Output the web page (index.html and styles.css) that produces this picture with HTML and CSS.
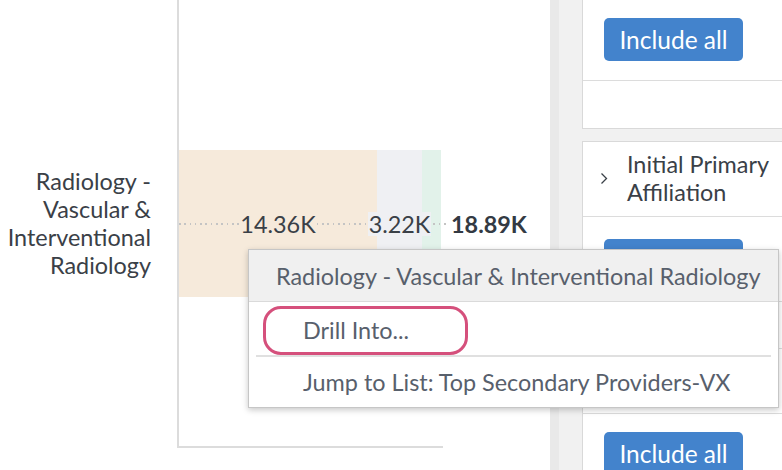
FILE: index.html
```html
<!DOCTYPE html>
<html>
<head>
<meta charset="utf-8">
<link rel="stylesheet" href="styles.css">
</head>
<body>
<div class="main">
  <div class="row-label">Radiology -<br>Vascular &amp;<br>Interventional<br>Radiology</div>
  <div class="plot">
    <div class="bar-row">
      <div class="bar">
        <div class="seg seg-a" style="width:198px"><span class="val">14.36K</span></div>
        <div class="seg seg-b" style="width:45px"><span class="val">3.22K</span></div>
        <div class="seg seg-c" style="width:19px"></div>
      </div>
      <span class="total">18.89K</span>
    </div>
  </div>
</div>
<div class="splitter"></div>
<div class="sidebar">
  <div class="panel first">
    <div class="section btn-section"><button class="btn">Include all</button></div>
    <div class="section empty"></div>
  </div>
  <div class="panel">
    <div class="section header">
      <svg class="chev" width="8" height="13" viewBox="0 0 8 13"><path d="M1.5 1.5 L6.5 6.5 L1.5 11.5" fill="none" stroke="#3a4047" stroke-width="1.3"/></svg>
      <span class="title">Initial Primary<br>Affiliation</span>
    </div>
    <div class="section btn-section"><button class="btn">Include all</button></div>
    <div class="section empty"></div>
    <div class="section empty2"></div>
    <div class="section btn-section"><button class="btn">Include all</button></div>
  </div>
</div>

<div class="menu">
  <div class="menu-head">Radiology - Vascular &amp; Interventional Radiology</div>
  <div class="menu-item drill"><span class="hl">Drill Into...</span></div>
  <div class="menu-sep"></div>
  <div class="menu-item jump">Jump to List: Top Secondary Providers-VX</div>
</div>
</body>
</html>
```

FILE: styles.css
```css
* { box-sizing: border-box; }
html, body { margin: 0; padding: 0; }
body {
  width: 782px;
  height: 470px;
  overflow: hidden;
  display: flex;
  font-family: Lato, "Open Sans", sans-serif;
  font-size: 23.4px;
  color: #3a4047;
  background: #fff;
  position: relative;
}

.main {
  width: 550px;
  flex-shrink: 0;
  display: flex;
  align-items: flex-start;
}
.row-label {
  width: 151px;
  margin-top: 167px;
  text-align: right;
  line-height: 28px;
  flex-shrink: 0;
}
.plot {
  margin-left: 26px;
  width: 266px;
  height: 448px;
  border-left: 2px solid #dcdcdc;
  border-bottom: 2px solid #dcdcdc;
  padding-top: 150px;
}
.bar-row {
  display: flex;
  align-items: center;
  width: max-content;
  height: 147px;
}
.bar {
  display: flex;
  height: 147px;
  position: relative;
}
.bar::before {
  content: "";
  position: absolute;
  z-index: 1;
  left: 0;
  right: -6px;
  top: 73px;
  height: 2px;
  background: repeating-linear-gradient(to right, #c4c4c4 0 1.6px, transparent 1.6px 5.3px);
}
.seg {
  height: 147px;
  display: flex;
  align-items: center;
  justify-content: center;
}
.seg-a { background: #f6eadb; }
.seg-b { background: #eff0f3; }
.seg-c { background: #e2f2ea; }
.val {
  position: relative;
  z-index: 2;
  padding: 0 1px;
  white-space: nowrap;
  line-height: 24px;
}
.seg-a .val { background: #f6eadb; }
.seg-b .val { background: #eff0f3; }
.total {
  margin-left: 10px;
  font-weight: 700;
  color: #333a43;
  position: relative;
  z-index: 2;
  background: #fff;
}

.splitter {
  width: 9px;
  flex-shrink: 0;
  background: #e9e9e9;
}
.sidebar {
  flex: 1;
  background: #f1f1f1;
  padding-left: 23px;
  display: flex;
  flex-direction: column;
  gap: 12px;
}
.panel {
  background: #fff;
  border: 1px solid #d9d9d9;
  border-right: none;
  margin-right: -10px;
}
.panel.first { margin-top: -1px; }
.section { border-bottom: 1px solid #dcdcdc; }
.section:last-child { border-bottom: none; }
.btn-section { padding: 18px 0 19px 21px; }
.panel .header + .btn-section { padding-top: 22px; }
.btn {
  display: block;
  width: 139px;
  height: 43px;
  border: none;
  border-radius: 5px;
  background: #4383cc;
  color: #fff;
  font-family: Lato, "Open Sans", sans-serif;
  font-size: 24.5px;
  padding: 0;
}
.empty { height: 47px; }
.empty2 { height: 65px; }
.header {
  display: flex;
  align-items: center;
  padding: 8px 0 10px 17px;
  line-height: 28px;
}
.chev { margin-right: 19px; flex-shrink: 0; }
.title { color: #3a4047; }

.menu {
  position: absolute;
  left: 248px;
  top: 249px;
  width: 531px;
  height: 159px;
  background: #fff;
  border: 1px solid #c6c6c6;
  box-shadow: 0 2px 6px rgba(0, 0, 0, 0.22);
  color: #58606c;
  z-index: 5;
}
.menu-head {
  height: 52px;
  background: #f0f0f0;
  border-bottom: 1px solid #dadada;
  padding-left: 27px;
  display: flex;
  align-items: center;
}
.menu-item {
  display: flex;
  align-items: center;
}
.drill {
  height: 53px;
  padding: 3px 0 0 14px;
}
.hl {
  display: flex;
  align-items: center;
  width: 205px;
  height: 49px;
  border: 3px solid #d5507c;
  border-radius: 18px;
  padding-left: 37px;
}
.menu-sep {
  height: 2px;
  margin: 0 7px;
  background: #e0e0e0;
}
.jump {
  height: 50px;
  padding-left: 54px;
}
```
